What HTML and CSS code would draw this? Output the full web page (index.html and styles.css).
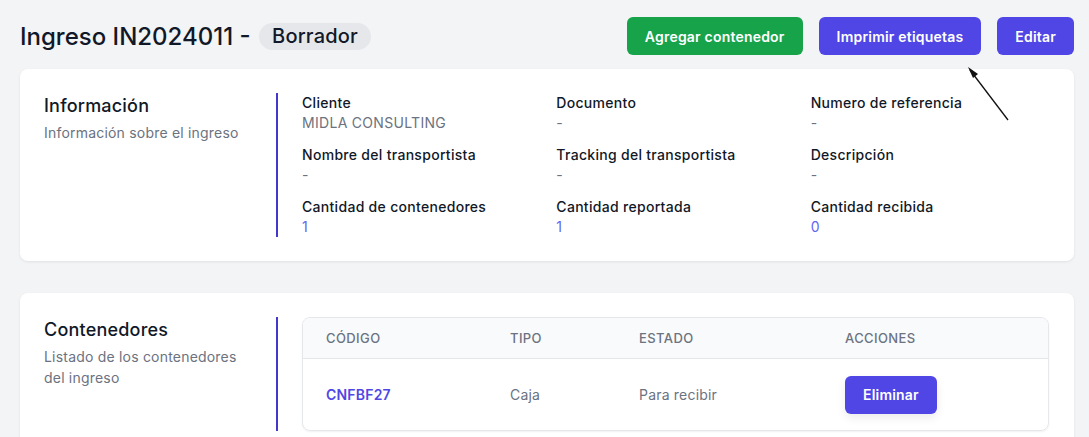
FILE: index.html
```html
<!DOCTYPE html>
<html lang="es">
<head>
    <meta charset="UTF-8">
    <meta name="viewport" content="width=device-width, initial-scale=1.0">
    <title>Ingreso IN2024011</title>
    <link rel="stylesheet" href="styles.css">
</head>
<body>
    <div class="page">
        <div class="header">
            <h1 class="title">Ingreso IN2024011 - <span class="badge">Borrador</span></h1>
            <div class="actions">
                <button class="btn btn-green">Agregar contenedor</button>
                <button class="btn btn-indigo">Imprimir etiquetas</button>
                <button class="btn btn-indigo">Editar</button>
            </div>
        </div>

        <!-- flecha de anotación -->
        <svg class="arrow" width="50" height="60" viewBox="0 0 50 60">
            <line x1="42" y1="54" x2="4" y2="4" stroke="#111" stroke-width="1.3"/>
            <polygon points="2,1 12,8 7,12" fill="#111"/>
        </svg>

        <div class="card">
            <div class="card-side">
                <h2>Información</h2>
                <p>Información sobre el ingreso</p>
            </div>
            <div class="card-body">
                <div class="info-grid">
                    <div class="field"><span class="label">Cliente</span><span class="value">MIDLA CONSULTING</span></div>
                    <div class="field"><span class="label">Documento</span><span class="value">-</span></div>
                    <div class="field"><span class="label">Numero de referencia</span><span class="value">-</span></div>
                    <div class="field"><span class="label">Nombre del transportista</span><span class="value">-</span></div>
                    <div class="field"><span class="label">Tracking del transportista</span><span class="value">-</span></div>
                    <div class="field"><span class="label">Descripción</span><span class="value">-</span></div>
                    <div class="field"><span class="label">Cantidad de contenedores</span><span class="value num">1</span></div>
                    <div class="field"><span class="label">Cantidad reportada</span><span class="value num">1</span></div>
                    <div class="field"><span class="label">Cantidad recibida</span><span class="value num">0</span></div>
                </div>
            </div>
        </div>

        <div class="card">
            <div class="card-side">
                <h2>Contenedores</h2>
                <p>Listado de los contenedores del ingreso</p>
            </div>
            <div class="card-body">
                <div class="table-wrap">
                    <table>
                        <thead>
                            <tr>
                                <th class="col-code">Código</th>
                                <th class="col-type">Tipo</th>
                                <th class="col-state">Estado</th>
                                <th>Acciones</th>
                            </tr>
                        </thead>
                        <tbody>
                            <tr>
                                <td class="code">CNFBF27</td>
                                <td>Caja</td>
                                <td>Para recibir</td>
                                <td><button class="btn btn-indigo btn-shadow">Eliminar</button></td>
                            </tr>
                        </tbody>
                    </table>
                </div>
            </div>
        </div>
    </div>
</body>
</html>
```

FILE: styles.css
```css
body {
    font-family: Inter, "Open Sans", sans-serif;
    background-color: #f3f4f6;
    color: #111827;
    margin: 0;
    padding: 0;
}

.page {
    position: relative;
    padding: 17px 15px 32px 20px;
}

.header {
    display: flex;
    justify-content: space-between;
    align-items: center;
    margin-bottom: 14px;
}

.title {
    margin: 0;
    font-size: 24px;
    font-weight: 500;
    display: flex;
    align-items: center;
    gap: 2px;
    white-space: pre;
}

.badge {
    background-color: #e5e7eb;
    border-radius: 14px;
    padding: 2px 13px;
    font-size: 20px;
    font-weight: 500;
    line-height: 23px;
    letter-spacing: 0.2px;
}

.actions {
    display: flex;
    gap: 16px;
}

.btn {
    font-family: inherit;
    font-size: 14px;
    font-weight: 600;
    letter-spacing: 0.2px;
    color: #fff;
    border: none;
    border-radius: 6px;
    height: 38px;
    padding: 0 18px;
    cursor: pointer;
}

.btn-green {
    background-color: #16a34a;
}

.btn-indigo {
    background-color: #4f46e5;
}

.btn-shadow {
    box-shadow: 0 4px 10px rgba(0, 0, 0, 0.08);
}

.arrow {
    position: absolute;
    left: 966px;
    top: 66px;
}

.card {
    display: flex;
    background-color: #fff;
    border-radius: 8px;
    box-shadow: 0 1px 3px rgba(0, 0, 0, 0.08);
    padding: 24px 25px 24px 24px;
    margin-bottom: 32px;
}

.card-side {
    width: 232px;
    flex-shrink: 0;
}

.card-side h2 {
    margin: 1px 0 0;
    font-size: 18px;
    font-weight: 500;
    line-height: 24px;
    letter-spacing: 0.2px;
}

.card-side p {
    margin: 4px 0 0;
    width: 200px;
    font-size: 14px;
    line-height: 21px;
    color: #6b7280;
    letter-spacing: 0.2px;
}

.card-body {
    flex: 1;
    border-left: 2px solid #4338ca;
    padding-left: 24px;
}

.info-grid {
    display: grid;
    grid-template-columns: repeat(3, 1fr);
    column-gap: 16px;
    row-gap: 12px;
}

.field {
    display: flex;
    flex-direction: column;
}

.label {
    font-size: 14px;
    font-weight: 500;
    line-height: 20px;
    letter-spacing: 0.3px;
}

.value {
    font-size: 14px;
    line-height: 20px;
    color: #6b7280;
    letter-spacing: 0.3px;
}

.value.num {
    color: #6366f1;
}

.table-wrap {
    border: 1px solid #e5e7eb;
    border-radius: 8px;
    overflow: hidden;
    box-shadow: 0 1px 2px rgba(0, 0, 0, 0.06);
}

table {
    width: 100%;
    border-collapse: collapse;
}

th {
    background-color: #f9fafb;
    text-align: left;
    font-size: 13px;
    font-weight: 500;
    text-transform: uppercase;
    letter-spacing: 0.4px;
    color: #6b7280;
    height: 40px;
    padding: 0 24px 0 23px;
    border-bottom: 1px solid #e5e7eb;
}

td {
    font-size: 14px;
    color: #6b7280;
    height: 71px;
    padding: 0 24px 0 23px;
    letter-spacing: 0.2px;
}

.col-code {
    width: 137px;
}

.col-type {
    width: 82px;
}

.col-state {
    width: 159px;
}

td.code {
    color: #4f46e5;
    font-weight: 600;
}
```
